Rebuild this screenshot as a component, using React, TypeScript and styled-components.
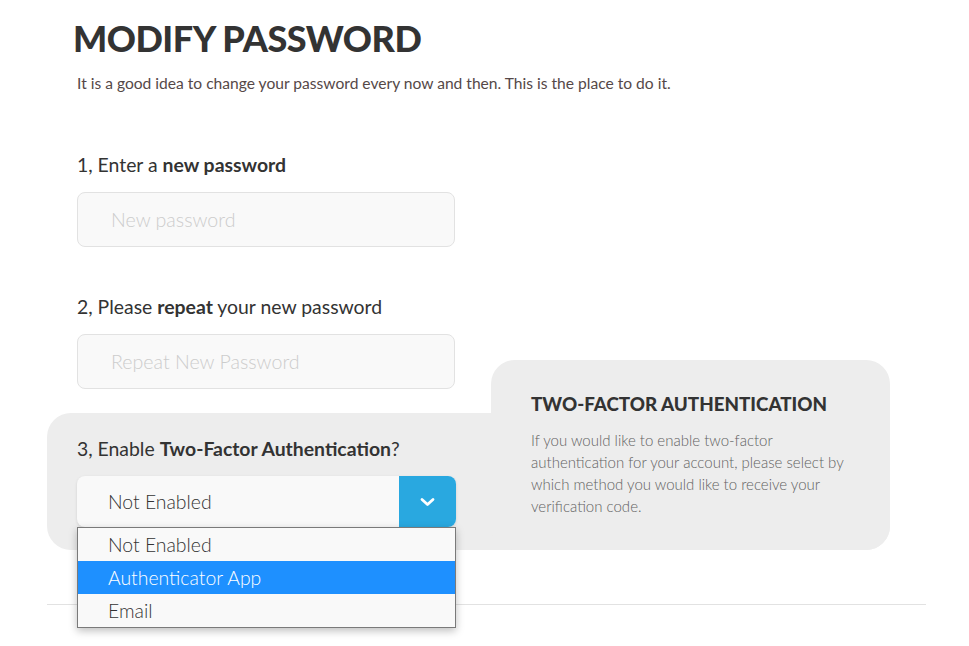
import React from 'react';
import styled, { createGlobalStyle } from 'styled-components';

const GlobalStyle = createGlobalStyle`
  body {
    margin: 0;
    background: #ffffff;
    font-family: 'Lato', 'Liberation Sans', sans-serif;
    color: #333333;
  }
`;

const Page = styled.main`
  padding: 19px 43px 40px 47px;
`;

// ---- header ----
const Header = styled.header`
  padding-left: 30px;
`;

const Title = styled.h1`
  margin: 0 0 0 -4px;
  font-size: 36px;
  line-height: 38px;
  font-weight: 900;
  letter-spacing: -0.5px;
  color: #333333;
`;

const Lead = styled.p`
  margin: 16px 0 0;
  font-size: 15.6px;
  line-height: 20px;
  color: #554848;
`;

// ---- form ----
const Fields = styled.section`
  padding-left: 30px;
  margin-top: 60px;
`;

const Step = styled.div`
  & + & {
    margin-top: 48px;
  }
`;

const Label = styled.label`
  display: block;
  font-size: 19.4px;
  line-height: 24px;
  color: #333333;
  b {
    font-weight: 700;
  }
`;

const Input = styled.input`
  display: block;
  box-sizing: border-box;
  width: 378px;
  height: 55px;
  margin-top: 15px;
  padding: 0 33px;
  border: 1px solid #e2e2e2;
  border-radius: 8px;
  background: #f9f9f9;
  font-family: inherit;
  font-size: 19.6px;
  font-weight: 300;
  color: #333333;
  outline: none;
  &::placeholder {
    color: #cccccc;
  }
`;

// ---- two factor panel ----
const Panel = styled.section`
  display: flex;
  width: 843px;
  margin-top: 24px;
  background: #ededed;
  border-radius: 24px;
`;

const PanelMain = styled.div`
  flex: 1;
  padding: 24px 30px 23px;
`;

const SelectWrap = styled.div`
  position: relative;
  width: 379px;
  margin-top: 15px;
`;

const SelectBox = styled.div`
  display: flex;
  height: 51px;
  border-radius: 8px;
  background: #f9f9f9;
  box-shadow: 0 1px 3px rgba(0, 0, 0, 0.12);
  overflow: hidden;
`;

const SelectValue = styled.span`
  flex: 1;
  display: flex;
  align-items: center;
  padding-left: 31px;
  font-size: 19.4px;
  font-weight: 300;
  color: #333333;
`;

const SelectButton = styled.span`
  width: 57px;
  display: flex;
  align-items: center;
  justify-content: center;
  background: #29a8e0;
`;

const Menu = styled.ul`
  position: absolute;
  top: 51px;
  left: 0;
  width: 379px;
  box-sizing: border-box;
  margin: 0;
  padding: 0;
  list-style: none;
  background: #f9f9f9;
  border: 1px solid #7a7a7a;
  box-shadow: 0 3px 8px rgba(0, 0, 0, 0.25);
  z-index: 2;
`;

const Option = styled.li<{ $active?: boolean }>`
  height: 33px;
  display: flex;
  align-items: center;
  padding-left: 30px;
  font-size: 19.4px;
  font-weight: 300;
  color: ${(p) => (p.$active ? '#ffffff' : '#333333')};
  background: ${(p) => (p.$active ? '#1e90ff' : 'transparent')};
`;

const InfoCard = styled.aside`
  width: 399px;
  box-sizing: border-box;
  margin-top: -53px;
  padding: 33px 37px 30px 40px;
  background: #ededed;
  border-radius: 24px;
`;

const InfoTitle = styled.h2`
  margin: 0;
  font-size: 18.8px;
  line-height: 22px;
  font-weight: 900;
  color: #333333;
`;

const InfoText = styled.p`
  margin: 14px 0 0;
  font-size: 15px;
  line-height: 22px;
  font-weight: 300;
  color: #626262;
`;

const Divider = styled.hr`
  margin: 54px 0 0;
  border: 0;
  border-top: 1px solid #e2e2e2;
`;

const Chevron = () => (
  <svg width="15" height="10" viewBox="0 0 15 10">
    <polyline points="2,2.5 7.5,7.5 13,2.5" fill="none" stroke="#ffffff" strokeWidth="2.8" strokeLinecap="round" strokeLinejoin="round" />
  </svg>
);

const App = () => {
  return (
    <>
      <GlobalStyle />
      <Page>
        <Header>
          <Title>MODIFY PASSWORD</Title>
          <Lead>It is a good idea to change your password every now and then. This is the place to do it.</Lead>
        </Header>
        <Fields>
          <Step>
            <Label>
              1, Enter a <b>new password</b>
            </Label>
            <Input type="password" placeholder="New password" />
          </Step>
          <Step>
            <Label>
              2, Please <b>repeat</b> your new password
            </Label>
            <Input type="password" placeholder="Repeat New Password" />
          </Step>
        </Fields>
        <Panel>
          <PanelMain>
            <Label>
              3, Enable <b>Two-Factor Authentication</b>?
            </Label>
            <SelectWrap>
              <SelectBox>
                <SelectValue>Not Enabled</SelectValue>
                <SelectButton>
                  <Chevron />
                </SelectButton>
              </SelectBox>
              <Menu>
                <Option>Not Enabled</Option>
                <Option $active>Authenticator App</Option>
                <Option>Email</Option>
              </Menu>
            </SelectWrap>
          </PanelMain>
          <InfoCard>
            <InfoTitle>TWO-FACTOR AUTHENTICATION</InfoTitle>
            <InfoText>
              If you would like to enable two-factor authentication for your account, please select by which
              method you would like to receive your verification code.
            </InfoText>
          </InfoCard>
        </Panel>
        <Divider />
      </Page>
    </>
  );
};

export default App;
